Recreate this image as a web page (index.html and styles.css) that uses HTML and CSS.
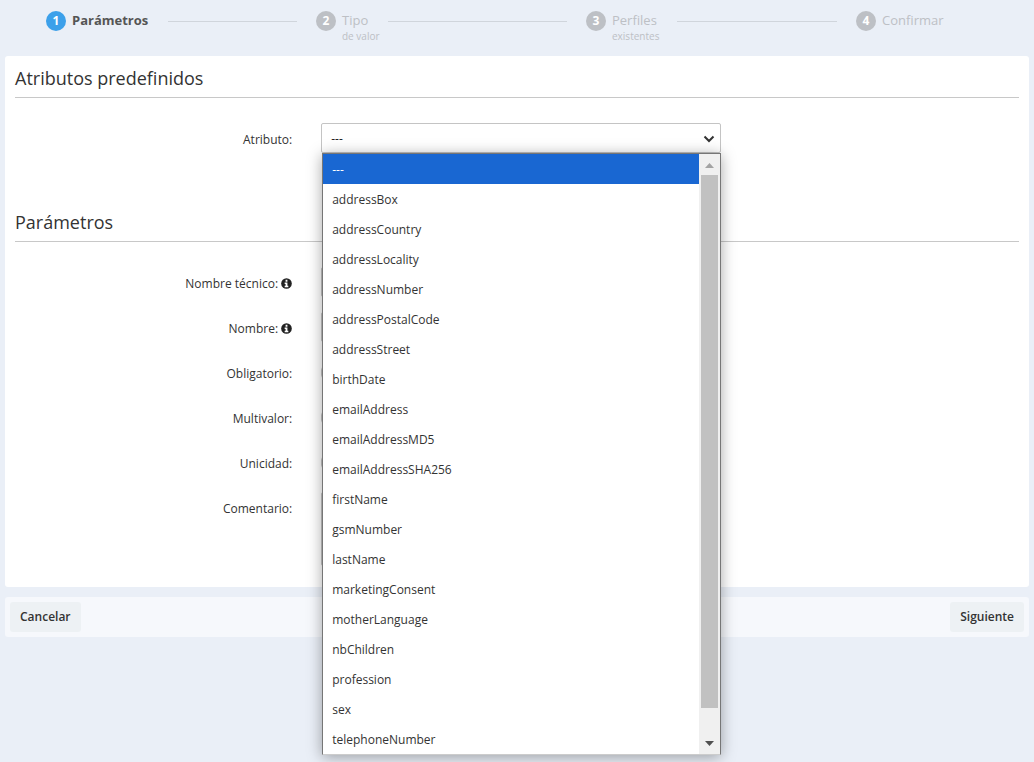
FILE: index.html
```html
<!DOCTYPE html>
<html lang="es">
<head>
<meta charset="utf-8">
<title>Parámetros</title>
<link rel="stylesheet" href="styles.css">
</head>
<body>
<ol class="steps">
  <li class="step active"><span class="num">1</span><span class="label">Parámetros</span><span class="line"></span></li>
  <li class="step"><span class="num">2</span><span class="label">Tipo</span><span class="line"></span><small class="sub">de valor</small></li>
  <li class="step"><span class="num">3</span><span class="label">Perfiles</span><span class="line"></span><small class="sub">existentes</small></li>
  <li class="step"><span class="num">4</span><span class="label">Confirmar</span></li>
</ol>
<form class="form">
  <main class="panel">
    <section class="group first">
      <h2>Atributos predefinidos</h2>
      <div class="row">
        <label for="attr">Atributo:</label>
        <div class="field picker">
          <select id="attr" class="control"><option>---</option></select>
          <svg class="chevron" viewBox="0 0 12 8" aria-hidden="true"><path d="M1.500 1.500 6 6l4.500-4.500" fill="none" stroke="#333" stroke-width="2"/></svg>
          <div class="popup">
            <ul class="options">
              <li class="selected">---</li>
              <li>addressBox</li>
              <li>addressCountry</li>
              <li>addressLocality</li>
              <li>addressNumber</li>
              <li>addressPostalCode</li>
              <li>addressStreet</li>
              <li>birthDate</li>
              <li>emailAddress</li>
              <li>emailAddressMD5</li>
              <li>emailAddressSHA256</li>
              <li>firstName</li>
              <li>gsmNumber</li>
              <li>lastName</li>
              <li>marketingConsent</li>
              <li>motherLanguage</li>
              <li>nbChildren</li>
              <li>profession</li>
              <li>sex</li>
              <li>telephoneNumber</li>
            </ul>
            <div class="scrollbar">
              <svg class="arrow" viewBox="0 0 21 21" aria-hidden="true"><path d="M6 14h9l-4.500-5z" fill="#a3a3a3"/></svg>
              <div class="thumb"></div>
              <svg class="arrow end" viewBox="0 0 21 21" aria-hidden="true"><path d="M6 8h9l-4.500 5z" fill="#505050"/></svg>
            </div>
          </div>
        </div>
      </div>
    </section>
    <section class="group">
      <h2>Parámetros</h2>
      <div class="row">
        <label for="tech">Nombre técnico: <svg class="info" viewBox="0 0 12 12" aria-hidden="true"><circle cx="6" cy="6" r="5.800" fill="#222"/><path d="M5 2h2v2H5zM4 5h3v3.500h1V10H4V8.500h1v-2H4z" fill="#fff"/></svg></label>
        <div class="field"><input id="tech" class="control" type="text"></div>
      </div>
      <div class="row">
        <label for="name">Nombre: <svg class="info" viewBox="0 0 12 12" aria-hidden="true"><circle cx="6" cy="6" r="5.800" fill="#222"/><path d="M5 2h2v2H5zM4 5h3v3.500h1V10H4V8.500h1v-2H4z" fill="#fff"/></svg></label>
        <div class="field"><input id="name" class="control" type="text"></div>
      </div>
      <div class="row">
        <label for="req">Obligatorio:</label>
        <div class="field"><input id="req" class="check" type="checkbox"></div>
      </div>
      <div class="row">
        <label for="multi">Multivalor:</label>
        <div class="field"><input id="multi" class="check" type="checkbox"></div>
      </div>
      <div class="row">
        <label for="uniq">Unicidad:</label>
        <div class="field"><input id="uniq" class="check" type="checkbox"></div>
      </div>
      <div class="row">
        <label for="note">Comentario:</label>
        <div class="field"><textarea id="note" class="control area"></textarea></div>
      </div>
    </section>
  </main>
  <footer class="actions">
    <button type="button" class="btn">Cancelar</button>
    <button type="submit" class="btn">Siguiente</button>
  </footer>
</form>
</body>
</html>
```
FILE: styles.css
```css
* { box-sizing: border-box; }
body {
  min-height: 100vh;
  margin: 0;
  background: #eaeff7;
  color: #333;
  font: 12px/18px "Open Sans", sans-serif;
}
.steps {
  display: grid;
  grid-template-columns: repeat(3, 1fr) 178px;
  min-height: 56px;
  margin: 0;
  padding: 11px 0 0 46px;
  list-style: none;
}
.step {
  display: grid;
  grid-template-columns: 20px auto 1fr;
  grid-template-rows: 20px 10px;
  column-gap: 6px;
  align-items: center;
  align-content: start;
  color: #bdc0c5;
}
.num {
  border-radius: 50%;
  background: #bdc0c5;
  color: #fff;
  font-weight: 700;
  line-height: 20px;
  text-align: center;
}
.label { padding-bottom: 2px; font-size: 13px; }
.line {
  height: 1px;
  margin: 0 19px 0 14px;
  background: #d0d5dc;
}
.sub {
  grid-column: 2 / 4;
  font-size: 10px;
  line-height: 10px;
}
.active { color: #555; font-weight: 700; }
.active .num { background: #3ca0ea; }
.form { padding: 0 5px; }
.panel {
  padding: 10px 10px 6px;
  border-radius: 3px;
  background: #fff;
}
.first { padding-bottom: 57px; }
h2 {
  margin: 0 0 25px;
  padding-bottom: 7px;
  border-bottom: 1px solid #c8c8c8;
  font-size: 18px;
  font-weight: 400;
  line-height: 24px;
}
.row {
  display: grid;
  grid-template-columns: 30% 400px;
  column-gap: 5px;
  margin-bottom: 15px;
}
.first .row { margin-bottom: 0; }
.row label {
  padding: 8px 24px 0 0;
  text-align: right;
}
.info {
  width: 11px;
  height: 11px;
  vertical-align: -1px;
}
.field { display: flex; min-height: 30px; align-items: center; }
.control {
  width: 100%;
  height: 30px;
  margin: 0;
  padding: 2px 9px 0;
  border: 1px solid #c4c4c4;
  border-radius: 2px;
  background: #fff;
  color: #222;
  font: inherit;
  appearance: none;
}
.area { height: 74px; resize: none; }
.check {
  width: 13px;
  height: 13px;
  margin: 0;
  border: 1px solid #c4c4c4;
  border-radius: 4px;
  background: #fff;
  appearance: none;
}
.check:checked { background: #3ca0ea; }
.picker { position: relative; }
.chevron {
  position: absolute;
  top: 12px;
  right: 6px;
  width: 12px;
  height: 8px;
  pointer-events: none;
}
.popup {
  position: absolute;
  z-index: 2;
  top: 100%;
  left: 1px;
  right: 0;
  display: flex;
  border: 1px solid #767676;
  border-bottom-color: #ccc;
  background: #fff;
  box-shadow: 0 2px 14px rgba(0, 0, 0, .35);
}
.options {
  flex: 1;
  margin: 0;
  padding: 0;
  list-style: none;
}
.options li { padding: 2px 9px 0; line-height: 28px; }
.options .selected { background: #1967d2; color: #fff; }
.scrollbar {
  display: flex;
  flex-direction: column;
  width: 21px;
  background: #f0f0f0;
}
.arrow { height: 21px; }
.thumb {
  height: 533px;
  margin: 0 2px;
  background: #c1c1c1;
}
.end { margin-top: auto; }
.actions {
  display: flex;
  justify-content: space-between;
  margin-top: 10px;
  padding: 5px;
  border-radius: 3px;
  background: #f6f8fc;
}
.btn {
  height: 30px;
  padding: 0 10px;
  border: 0;
  border-radius: 3px;
  background: #edf1f4;
  color: #333;
  font: 600 12px/18px "Open Sans", sans-serif;
}
```
